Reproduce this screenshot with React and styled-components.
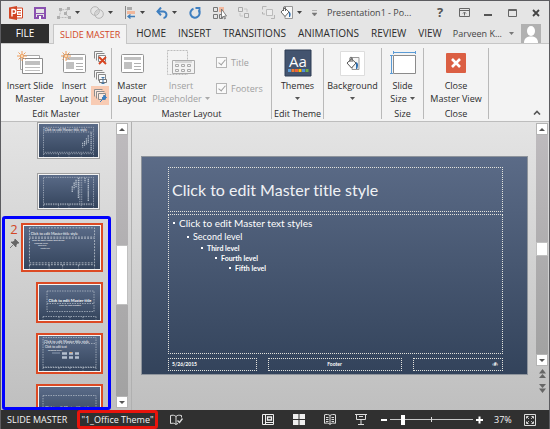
import { useState } from 'react'
import styled, { createGlobalStyle, css } from 'styled-components'

const GlobalStyle = createGlobalStyle`
  * {
    box-sizing: border-box;
  }
  body {
    margin: 0;
    font-family: "Open Sans", "Noto Sans", sans-serif;
    font-size: 9px;
    line-height: 13px;
    color: #2b2b2b;
  }
  button, input {
    font: inherit;
    color: inherit;
    margin: 0;
  }
  svg {
    display: block;
    flex: none;
  }
`

const Window = styled.div`
  display: flex;
  flex-direction: column;
  height: 100vh;
  overflow: hidden;
  border: 1px solid #5c5c60;
  border-bottom: 0;
  background: #e5e5e5;
`

const PlainButton = styled.button`
  display: flex;
  align-items: center;
  justify-content: center;
  flex: none;
  padding: 0;
  border: 0;
  background: none;
  white-space: nowrap;
`

/* title bar */
const TitleBar = styled.header`
  display: flex;
  align-items: center;
  height: 23px;
  padding: 0 7px 0 8px;
`
const QuickTools = styled.div`
  display: flex;
  align-items: center;
`
const QuickButton = styled(PlainButton)`
  width: ${(p) => p.$width || 24}px;
  justify-content: flex-start;
  gap: 4px;
`
const WindowTitle = styled.h1`
  flex: 1;
  margin: 0;
  font-size: 9px;
  font-weight: 400;
  color: #444;
  white-space: nowrap;
`
const WindowButtons = styled.div`
  display: flex;
  align-items: center;
  gap: 12px;
`
const WindowButton = styled(PlainButton)`
  width: 12px;
  height: 16px;
  font-size: 13px;
  font-weight: 700;
  color: #555;
`

/* tabs */
const TabRow = styled.nav`
  display: flex;
  align-items: stretch;
  height: 20px;
  padding-right: 8px;
  border-bottom: 1px solid #c6c6c6;
`
const Tab = styled(PlainButton)`
  padding: 0 6px;
  font-size: 10px;
  ${(p) => p.$file && css`
    width: 48px;
    margin-right: 4px;
    background: #2f2f2f;
    color: #fff;
  `}
  ${(p) => p.$active && css`
    margin-bottom: -1px;
    margin-right: 3px;
    border: 1px solid #c6c6c6;
    border-bottom: 0;
    background: #f3f3f3;
    color: #d24726;
    font-size: 9px;
  `}
`
const Account = styled(PlainButton)`
  margin-left: auto;
  gap: 7px;
  color: #444;
`

/* ribbon */
const Ribbon = styled.section`
  display: flex;
  height: 78px;
  padding: 4px 0 2px;
  background: #f3f3f3;
  border-bottom: 1px solid #bdbdbd;
`
const Group = styled.div`
  display: flex;
  flex-direction: column;
  align-items: center;
  justify-content: space-between;
  flex: none;
  width: ${(p) => p.$width}px;
  border-right: 1px solid #b9b9b9;
`
const GroupBody = styled.div`
  display: flex;
  flex: 1;
  justify-content: center;
`
const GroupLabel = styled.div`
  line-height: 11px;
  white-space: nowrap;
`
const BigButton = styled(PlainButton)`
  flex-direction: column;
  justify-content: flex-start;
  width: ${(p) => p.$width}px;
  color: ${(p) => (p.disabled ? '#a0a0a0' : 'inherit')};
`
const IconBox = styled.span`
  display: flex;
  align-items: center;
  justify-content: center;
  height: 30px;
  margin-bottom: 1px;
`
const Line = styled.span`
  display: flex;
  align-items: center;
  gap: 3px;
  height: 13px;
`
const SmallTools = styled.div`
  display: flex;
  flex-direction: column;
`
const SmallButton = styled(PlainButton)`
  width: 18px;
  height: 19px;
  background: ${(p) => (p.$on ? '#f8cbb3' : 'none')};
`
const Checks = styled.div`
  display: flex;
  flex-direction: column;
  gap: 13px;
  width: 57px;
  padding: 8px 0 0 4px;
`
const Check = styled.label`
  display: flex;
  align-items: center;
  gap: 4px;
  color: #a0a0a0;
`
const CheckBox = styled.input`
  appearance: none;
  display: grid;
  place-items: center;
  width: 11px;
  height: 11px;
  border: 1px solid #b5b5b5;
  background: #fafafa;
  &:checked::after {
    content: "";
    width: 3px;
    height: 6px;
    margin-bottom: 2px;
    border: solid #a0a0a0;
    border-width: 0 1px 1px 0;
    transform: rotate(40deg);
  }
`
const Collapse = styled(PlainButton)`
  margin: auto 8px 0 auto;
  height: 13px;
`

/* work area */
const Work = styled.main`
  display: flex;
  flex: 1;
  min-height: 0;
  padding-right: 1px;
  background: linear-gradient(#e4e4e4, #bfbfbf);
`
const Pane = styled.aside`
  display: flex;
  flex-direction: column;
  flex: none;
  width: 115px;
  overflow: hidden;
  padding: 0 5px 0 1px;
`
const LayoutThumbs = styled.div`
  display: flex;
  flex-direction: column;
  align-items: flex-end;
  gap: 14px;
  padding: 0 11px 6px 0;
`
const SelectedMaster = styled.div`
  display: grid;
  grid-template-columns: 14px 1fr;
  align-content: start;
  flex: 1;
  min-height: 0;
  overflow: hidden;
  padding: 4px 6px 0 2px;
  border: 3px solid #0000fe;
  border-radius: 3px;
`
const MasterMark = styled.div`
  display: flex;
  flex-direction: column;
  align-items: center;
  gap: 3px;
  font-size: 13px;
  color: #d24726;
`
const SelectedThumbs = styled.div`
  display: flex;
  flex-direction: column;
  align-items: flex-end;
  gap: 10px;
`
const Thumb = styled.button`
  display: block;
  flex: none;
  width: ${(p) => (p.$master ? 82 : p.$selected ? 67 : 63)}px;
  height: ${(p) => (p.$master ? 49 : p.$selected ? 41 : 37)}px;
  padding: 1px;
  border: ${(p) => (p.$selected ? '2px solid #dc4a24' : '1px solid #a0a0a0')};
  background: #f4f4f4;
  svg {
    width: 100%;
    height: 100%;
    background: linear-gradient(#5a6b88, #34445c);
  }
`

const ScrollBar = styled.div`
  display: flex;
  flex-direction: column;
  flex: none;
  width: 12px;
  padding-top: 1px;
  padding-bottom: ${(p) => p.$bottom || 2}px;
`
const ScrollButton = styled(PlainButton)`
  height: 12px;
  border: 1px solid #b4b4b4;
  background: #fff;
`
const Track = styled.div`
  display: flex;
  flex-direction: column;
  flex: 1;
  background: linear-gradient(#bdbabd, #a2a2a2);
`
const ScrollThumb = styled.div`
  flex: ${(p) => p.$size};
  border: 1px solid #c0c0c0;
  background: #fff;
`
const Gap = styled.div`
  flex: ${(p) => p.$size};
`
const PageButtons = styled.div`
  display: flex;
  flex-direction: column;
  align-items: center;
  gap: 6px;
  padding-top: 3px;
`
const Canvas = styled.div`
  flex: 1;
  min-width: 0;
  margin-left: 3px;
  padding: 34px 8px 0 9px;
  border-left: 1px solid #b0b0b0;
`
const Slide = styled.article`
  display: flex;
  flex-direction: column;
  gap: 2px;
  aspect-ratio: 387 / 219;
  padding: 10px 24px 3px 26px;
  border: 1px solid #8e949c;
  background: linear-gradient(#5b6b87, #33435b);
  color: #fff;
  font-family: Lato, sans-serif;
  font-variant-ligatures: none;
`
const placeholder = css`
  border: 1px dotted #e4e4de;
`
const SlideTitle = styled.h2`
  ${placeholder}
  display: flex;
  align-items: center;
  height: 45px;
  margin: 0;
  padding: 0 3px;
  font-size: 16px;
  font-weight: 400;
  color: #f0f2f5;
  white-space: nowrap;
`
const SlideBody = styled.ul`
  ${placeholder}
  flex: 1;
  margin: 0;
  padding: 1px 4px;
  list-style: none;
`
const Level = styled.li`
  display: flex;
  align-items: center;
  gap: 4px;
  padding-left: ${(p) => p.$depth * 14}px;
  font-size: ${(p) => [10, 9, 7, 7, 7][p.$depth]}px;
  font-weight: ${(p) => (p.$depth < 2 ? 400 : 700)};
  line-height: ${(p) => [14, 13, 10, 10, 10][p.$depth]}px;
  &::before {
    content: "";
    width: 2px;
    height: 2px;
    background: #fff;
  }
`
const SlideFooter = styled.footer`
  display: grid;
  grid-template-columns: 89fr 134fr 90fr;
  gap: 11px;
  margin-top: 2px;
  font-size: 5px;
  font-weight: 700;
  line-height: 11px;
`
const FooterBox = styled.div`
  ${placeholder}
  padding: 0 4px 0 3px;
  text-align: ${(p) => p.$align};
`

/* status bar */
const StatusBar = styled.footer`
  display: flex;
  align-items: center;
  flex: none;
  height: 19px;
  padding: 0 13px 0 6px;
  background: #303030;
  color: #f4f4f4;
`
const StatusText = styled.span`
  width: 70px;
  white-space: nowrap;
`
const ThemeName = styled.span`
  display: flex;
  align-items: center;
  justify-content: center;
  align-self: stretch;
  width: 81px;
  margin-right: 12px;
  border: 3px solid #e8140c;
  border-radius: 3px;
  white-space: nowrap;
`
const Views = styled.div`
  display: flex;
  gap: 19px;
  margin-left: auto;
  margin-right: 14px;
`
const Slider = styled.input`
  appearance: none;
  width: 83px;
  height: 12px;
  margin: 0 3px;
  background:
    linear-gradient(#ddd, #ddd) center / 1px 5px no-repeat,
    linear-gradient(#c8c8c8, #c8c8c8) center / 100% 1px no-repeat;
  &::-webkit-slider-thumb {
    appearance: none;
    width: 4px;
    height: 10px;
    background: #fff;
  }
`
const Percent = styled.span`
  width: 41px;
  padding-left: 11px;
`

const Icon = ({ w, h = w, children, ...rest }) => (
  <svg width={w} height={h} viewBox={`0 0 ${w} ${h}`} fill="none" aria-hidden="true" {...rest}>
    {children}
  </svg>
)

const Caret = ({ color = '#555' }) => (
  <Icon w={5} h={3}><path d="M0 0h5L2.500 3z" fill={color} /></Icon>
)

const PowerPointIcon = () => (
  <Icon w={14}>
    <path d="M6 2h7.500v10H6z" fill="#fff" stroke="#d24726" />
    <path d="M8 4.500h4M9 7h3M8 9.500h4" stroke="#d24726" />
    <path d="M0 1.500L8 0v14L0 12.500z" fill="#d24726" />
    <path d="M3 10.500v-7h1.800a1.900 1.900 0 0 1 0 3.900H3" stroke="#fff" strokeWidth="1.400" />
  </Icon>
)
const SaveIcon = () => (
  <Icon w={12}>
    <path d="M1 1h10v10H1z" stroke="#8a51b0" strokeWidth="2" />
    <path d="M2 6.500h8" stroke="#8a51b0" />
    <path d="M3 8h6v4H3z" fill="#8a51b0" />
    <path d="M5 9h2v3H5z" fill="#fff" />
  </Icon>
)
const EditPointsIcon = () => (
  <Icon w={14} h={12}>
    <path d="M2 10.500L4 3l8-1-4 4 4 4.500z" stroke="#b8b8b8" strokeDasharray="2 1" />
    <path d="M0 9h3v3H0zM2 1h3v3H2zM10 0h3v3h-3zM7 5h3v3H7zM11 9h3v3h-3z" fill="#b0b0b0" />
  </Icon>
)
const MergeIcon = () => (
  <Icon w={14} h={13}>
    <circle cx="5" cy="5" r="4.300" stroke="#b4b4b4" />
    <circle cx="9" cy="8" r="4.300" stroke="#b4b4b4" />
    <path d="M5 8a4.300 4.300 0 0 1 4.300-4.300A4.300 4.300 0 0 1 5 8z" fill="#cfcfcf" />
  </Icon>
)
const AlignIcon = () => (
  <Icon w={11} h={13}>
    <path d="M.5 0v13" stroke="#888" />
    <path d="M2 1h5v3H2z" fill="#aaa" />
    <path d="M2 5h8v3H2z" fill="#f0b79b" />
    <path d="M10 10.500H3M5.500 8.500l-2.500 2 2.500 2" stroke="#3f7db8" strokeWidth="1.300" />
  </Icon>
)
const UndoIcon = () => (
  <Icon w={12} h={12}>
    <path d="M1.500 4.500h5.500a3.200 3.200 0 0 1 .5 6.400" stroke="#3f7fc0" strokeWidth="2" />
    <path d="M5 .5L1.500 4.500 5 8.300" stroke="#3f7fc0" strokeWidth="2" />
  </Icon>
)
const RedoIcon = () => (
  <Icon w={12} h={12}>
    <path d="M4.500 1.700A4.600 4.600 0 1 0 9.600 3.200" stroke="#3f7fc0" strokeWidth="2" />
    <path d="M6.500 1h4v4.500" stroke="#3f7fc0" strokeWidth="1.800" />
  </Icon>
)
const SelectIcon = () => (
  <Icon w={14} h={14}>
    <path d="M.5 1.500h4v4h-4zM.5 8.500h4v4h-4zM6.500 8.500h3v4h-3z" stroke="#777" />
    <path d="M6 1h5v5H6z" fill="#f2b99f" />
    <path d="M8.500 3v9l2-2 1 3 1-.5-1-2.500h2z" fill="#fff" stroke="#666" strokeWidth=".8" />
  </Icon>
)
const GroupIcon = () => (
  <Icon w={13} h={13}>
    <path d="M1.500 1.500h4v4h-4zM7.500 7.500h4v4h-4z" fill="#e8e8e8" stroke="#aaa" />
    <path d="M7 3h3v3M3 7v3h3" stroke="#c4c4c4" />
  </Icon>
)
const UngroupIcon = () => (
  <Icon w={13} h={13}>
    <path d="M4.500 3.500h6v6h-6z" fill="#ececec" stroke="#bbb" />
    <path d="M.5 3.500v-3h4M12.500 9v3.500H9M.5 6v2H3" stroke="#b4b4b4" />
  </Icon>
)
const BucketIcon = () => (
  <Icon w={13} h={13}>
    <path d="M5 .5h7.500v12H5z" fill="#f6f6f6" stroke="#999" />
    <path d="M1 6l4-4 4 4-4 4.500z" fill="#fff" stroke="#666" />
    <path d="M3.500 5V1.500c0-1 2-1 2 0V5" stroke="#666" />
    <path d="M9 5.500c2 1 2 3 1 5.500H9z" fill="#2f6fb0" />
  </Icon>
)

const Spark = () => (
  <g stroke="#ee9c5a" strokeWidth="1">
    <path d="M5 0v3M5 7v3M0 5h3M7 5h3M1.500 1.500l2 2M6.500 6.500l2 2M1.500 8.500l2-2M6.500 3.500l2-2" />
    <circle cx="5" cy="5" r="1.500" fill="#fff7dc" />
  </g>
)
const InsertSlideIcon = () => (
  <Icon w={26} h={24}>
    <path d="M3.500 4.500h19v14h-19z" fill="#fff" stroke="#a8a8a8" />
    <path d="M5.500 7.500h20v15h-20z" fill="#fff" stroke="#8b8b8b" />
    <path d="M8 10h15v4H8z" fill="#c0c0c0" />
    <path d="M8 16.500h15M8 19.500h15" stroke="#c0c0c0" />
    <Spark />
  </Icon>
)
const LayoutIcon = ({ spark }) => (
  <Icon w={26} h={24}>
    <rect x="2.500" y="3.500" width="22" height="18" rx="1" fill="#fff" stroke="#949494" />
    <path d="M5 6h17v3H5zM5 11h8v7H5z" fill="#c0c0c0" />
    <path d="M15 12.500h7M15 15.500h7M15 18.500h7" stroke="#b0b0b0" />
    {spark && <Spark />}
  </Icon>
)
const PlaceholderIcon = () => (
  <Icon w={28} h={28}>
    <path d="M.5 1.500h20v24H.500z" stroke="#bdbdbd" strokeDasharray="2 1" />
    <path d="M5.500 11.500h22v13h-22z" fill="#f3f3f3" stroke="#aaa" />
    <path d="M8 13h17" stroke="#bbb" />
    <path d="M8.500 15.500h3v2h-3zM14.500 15.500h3v2h-3zM20.500 15.500h3v2h-3zM8.500 20.500h3v2h-3zM14.500 20.500h3v2h-3zM20.500 20.500h3v2h-3z" stroke="#aaa" />
  </Icon>
)
const stack = 'M.5 7.500v-7h8M2.500 9.500v-7h8M4.500 4.500h7v6h-7z'
const DeleteIcon = () => (
  <Icon w={13} h={14}>
    <path d={stack} stroke="#888" fill="#f8f8f8" />
    <path d="M5 6l7 7M12 6l-7 7" stroke="#d9441f" strokeWidth="1.800" />
  </Icon>
)
const RenameIcon = () => (
  <Icon w={13} h={14}>
    <path d={stack} stroke="#888" fill="#f8f8f8" />
    <path d="M5.500 9.500h7v3h-7z" stroke="#777" fill="#fff" />
    <path d="M9 7.500v6M7.500 7.500h3M7.500 13.500h3" stroke="#4679a8" />
  </Icon>
)
const PreserveIcon = () => (
  <Icon w={13} h={14}>
    <path d={stack} stroke="#8d8d8d" fill="#fbe9df" />
    <path d="M10 6l2.500 2.500-1 .5-1.500 2-2-2 1.500-1.500z" fill="#3c7fc0" stroke="#3c7fc0" />
    <path d="M8.500 10.500L6 13" stroke="#3c7fc0" />
  </Icon>
)
const ThemesIcon = () => (
  <Icon w={28} h={28}>
    <path d="M1 1h26v26H1z" fill="#43546f" stroke="#2f3d54" />
    <text x="5" y="18" fill="#fff" fontSize="15" fontFamily="Open Sans">Aa</text>
    <path d="M4 20h3v3H4z" fill="#5b9bd5" />
    <path d="M7.500 20h3v3h-3z" fill="#ed7d31" />
    <path d="M11 20h3v3h-3z" fill="#f0603a" />
    <path d="M14.500 20h3v3h-3z" fill="#ffc000" />
    <path d="M18 20h3v3h-3z" fill="#4f8ee0" />
    <path d="M21.500 20h3v3h-3z" fill="#70ad47" />
  </Icon>
)
const BackgroundIcon = () => (
  <Icon w={25} h={25}>
    <path d="M.5.5h24v24H.5z" fill="#fff" stroke="#ddd" />
    <g transform="translate(6 5)">
      <path d="M6 1.500h7v12H6z" fill="#f6f6f6" stroke="#999" />
      <path d="M1 7l4.500-4 4.500 4-4.500 5z" fill="#fff" stroke="#555" />
      <path d="M4 6V2c0-1 2-1 2 0v4" stroke="#555" />
      <path d="M10 6c2.500 1 2.500 4 1 7h-1z" fill="#2f6fb0" />
    </g>
  </Icon>
)
const SlideSizeIcon = () => (
  <Icon w={26} h={24}>
    <path d="M3.500 4.500h22v18h-22z" fill="#fff" stroke="#8b8b8b" />
    <path d="M3 1.500h23M3.500 0v3M25.500 0v3M1.500 4v19M0 4.500h3M0 22.500h3" stroke="#5b9bd5" />
  </Icon>
)
const CloseIcon = () => (
  <Icon w={20} h={20}>
    <rect width="20" height="20" rx="1" fill="#db5f43" />
    <path d="M6 6l8 8M14 6l-8 8" stroke="#fff" strokeWidth="2.600" />
  </Icon>
)
const PinIcon = () => (
  <Icon w={9} h={9}>
    <path d="M5 0l4 4-1.500.2L6 6v2L3.500 5.500 1 3h2l1.700-1.500zM3.200 5.800L0 9" fill="#666" stroke="#666" strokeWidth=".8" />
  </Icon>
)
const ArrowIcon = ({ down }) => (
  <Icon w={6} h={3}><path d={down ? 'M0 0h6L3 3z' : 'M0 3h6L3 0z'} fill="#555" /></Icon>
)
const PageIcon = ({ down }) => (
  <Icon w={7} h={9}>
    {down
      ? <path d="M0 0h7L3.500 4zM0 4.500h7L3.500 9z" fill="#666" />
      : <path d="M0 4.500h7L3.500 0zM0 9h7L3.500 5z" fill="#666" />}
  </Icon>
)

const dash = { stroke: '#b9c1cc', strokeWidth: 0.7, strokeDasharray: '1.500 1' }
const tiny = { fill: '#fff', fontFamily: 'Lato', fontSize: 3.500 }
const thumbFooter = 'M4 31.500h53M4 31.500v3M20 31.500v3M31 31.500v3M44 31.500v3M57 31.500v3'

const thumbArt = {
  vertical: (
    <>
      <path d="M4 3.500h53v5H4zM4 9v21h53V9" {...dash} />
      <path d={thumbFooter} {...dash} />
      <text x="5" y="7.500" {...tiny}>Click to edit Master title style</text>
      <path d="M54.500 9v19M51.500 12v8M49.500 15v7M47.500 18v5M45.500 20v5" stroke="#b5bfcc" strokeWidth="1.200" strokeDasharray="1.500 .7" />
    </>
  ),
  verticalTitle: (
    <>
      <path d="M4 2.500h53v28H4zM42.500 2.500v28M44.500 2.500v28" {...dash} />
      <path d={thumbFooter} {...dash} />
      <path d="M51.500 4v24M48 3v5M41 3v22M38.500 5v8M36.500 8v7M34.500 12v6" stroke="#b5bfcc" strokeWidth="1.400" strokeDasharray="1.500 .7" />
    </>
  ),
  title: (
    <>
      <path d="M8 6h47v12.500H8zM8 18.500v8h47v-8" {...dash} />
      <path d={thumbFooter} {...dash} />
      <text x="31" y="17" textAnchor="middle" {...tiny} fontSize="4" fontWeight="700">Click to edit Master title</text>
      <text x="31" y="21" textAnchor="middle" {...tiny} fontSize="2.500">Click to edit subtitle</text>
    </>
  ),
  content: (
    <>
      <path d="M4 1.500h53v6H4zM4 8v23h53V8" {...dash} />
      <path d={thumbFooter} {...dash} />
      <text x="5" y="6.500" {...tiny}>Click to edit Master title style</text>
      <text x="6" y="11.500" {...tiny} fontSize="3">Click to edit text</text>
      <text x="9" y="14.500" {...tiny} fontSize="2.500">Second level</text>
      <path d="M13 17h8" stroke="#8b9bb2" />
      <path d="M23 17.500h5M30 17.500h4M36 17.500h4M23 21.500h5M30 21.500h4M36 21.500h4" stroke="#b4bfce" strokeWidth="2.500" />
      <path d="M31 16.500h2" stroke="#d9a06f" />
    </>
  ),
  section: (
    <>
      <path d="M4 8.500h53v14H4z" {...dash} />
      <text x="6" y="21.500" {...tiny}>Click to edit Master title style</text>
      <path d={thumbFooter} {...dash} />
    </>
  ),
  master: (
    <>
      <path d="M4 1.500h53v7.500H4zM4 10v20h53V10z" {...dash} />
      <path d={thumbFooter} {...dash} />
      <text x="5" y="7" {...tiny} fontSize="3">Click to edit Master title style</text>
      <text x="6" y="12" {...tiny} fontSize="2">Click to edit Master text styles</text>
      <text x="8" y="14.500" {...tiny} fontSize="2">Second level</text>
      <text x="11" y="16.500" {...tiny} fontSize="1.500">Third level</text>
      <text x="13" y="18.500" {...tiny} fontSize="1.500">Fourth level</text>
    </>
  ),
}

function LayoutThumb({ kind, label, ...rest }) {
  return (
    <Thumb type="button" aria-label={label} {...rest}>
      <svg viewBox="0 0 61 35" fill="none">{thumbArt[kind]}</svg>
    </Thumb>
  )
}

const quickTools = [
  { label: 'PowerPoint', icon: <PowerPointIcon />, width: 25 },
  { label: 'Save', icon: <SaveIcon />, width: 23 },
  { label: 'Edit Points', icon: <EditPointsIcon />, width: 33, caret: true },
  { label: 'Merge Shapes', icon: <MergeIcon />, width: 35, caret: true },
  { label: 'Align', icon: <AlignIcon />, width: 31, caret: true },
  { label: 'Undo', icon: <UndoIcon />, width: 33, caret: true },
  { label: 'Redo', icon: <RedoIcon />, width: 24 },
  { label: 'Select', icon: <SelectIcon />, width: 24 },
  { label: 'Group', icon: <GroupIcon />, width: 25 },
  { label: 'Ungroup', icon: <UngroupIcon />, width: 18 },
  { label: 'Shape Fill', icon: <BucketIcon />, width: 32, caret: true },
]

const tabs = ['HOME', 'INSERT', 'TRANSITIONS', 'ANIMATIONS', 'REVIEW', 'VIEW']
const levels = ['Click to edit Master text styles', 'Second level', 'Third level', 'Fourth level', 'Fifth level']

function RibbonBar() {
  return (
    <Ribbon>
      <Group $width={111}>
        <GroupBody>
          <BigButton $width={54}>
            <IconBox><InsertSlideIcon /></IconBox>
            <Line>Insert Slide</Line>
            <Line>Master</Line>
          </BigButton>
          <BigButton $width={34}>
            <IconBox><LayoutIcon spark /></IconBox>
            <Line>Insert</Line>
            <Line>Layout</Line>
          </BigButton>
          <SmallTools>
            <SmallButton aria-label="Delete"><DeleteIcon /></SmallButton>
            <SmallButton aria-label="Rename"><RenameIcon /></SmallButton>
            <SmallButton aria-label="Preserve" $on><PreserveIcon /></SmallButton>
          </SmallTools>
        </GroupBody>
        <GroupLabel>Edit Master</GroupLabel>
      </Group>
      <Group $width={160}>
        <GroupBody>
          <BigButton $width={36}>
            <IconBox><LayoutIcon /></IconBox>
            <Line>Master</Line>
            <Line>Layout</Line>
          </BigButton>
          <BigButton $width={62} disabled>
            <IconBox><PlaceholderIcon /></IconBox>
            <Line>Insert</Line>
            <Line>Placeholder <Caret color="#aaa" /></Line>
          </BigButton>
          <Checks>
            <Check><CheckBox type="checkbox" defaultChecked disabled />Title</Check>
            <Check><CheckBox type="checkbox" defaultChecked disabled />Footers</Check>
          </Checks>
        </GroupBody>
        <GroupLabel>Master Layout</GroupLabel>
      </Group>
      <Group $width={52}>
        <GroupBody>
          <BigButton $width={48}>
            <IconBox><ThemesIcon /></IconBox>
            <Line>Themes</Line>
            <Line><Caret /></Line>
          </BigButton>
        </GroupBody>
        <GroupLabel>Edit Theme</GroupLabel>
      </Group>
      <Group $width={58}>
        <GroupBody>
          <BigButton $width={56}>
            <IconBox><BackgroundIcon /></IconBox>
            <Line>Background</Line>
            <Line><Caret /></Line>
          </BigButton>
        </GroupBody>
      </Group>
      <Group $width={42}>
        <GroupBody>
          <BigButton $width={40}>
            <IconBox><SlideSizeIcon /></IconBox>
            <Line>Slide</Line>
            <Line>Size <Caret /></Line>
          </BigButton>
        </GroupBody>
        <GroupLabel>Size</GroupLabel>
      </Group>
      <Group $width={65}>
        <GroupBody>
          <BigButton $width={62}>
            <IconBox><CloseIcon /></IconBox>
            <Line>Close</Line>
            <Line>Master View</Line>
          </BigButton>
        </GroupBody>
        <GroupLabel>Close</GroupLabel>
      </Group>
      <Collapse aria-label="Collapse the ribbon">
        <Icon w={8} h={5}><path d="M1 4.500l3-3 3 3" stroke="#555" strokeWidth="1.600" /></Icon>
      </Collapse>
    </Ribbon>
  )
}

function Status() {
  const [zoom, setZoom] = useState(37)
  return (
    <StatusBar>
      <StatusText>SLIDE MASTER</StatusText>
      <ThemeName>"1_Office Theme"</ThemeName>
      <PlainButton aria-label="Spelling">
        <Icon w={13} h={12} stroke="#ddd">
          <path d="M6 2.500C4.500 1 2.500 1 .5 1.500v8c2-.5 4-.5 5.500 1 .5-.5 1-.8 2-1M6 2.500v8M6 2.500C7.500 1 9 1 11.500 1.500v2" />
          <path d="M7.500 6.500l2 2 3-4" strokeWidth="1.400" />
        </Icon>
      </PlainButton>
      <Views>
        <PlainButton aria-label="Normal">
          <Icon w={12} h={11} stroke="#eee">
            <path d="M.5.5h11v10H.5zM3.500 1v9M4 8.500h7.500" />
            <path d="M5.500 3h4v3h-4z" strokeWidth="1.300" />
          </Icon>
        </PlainButton>
        <PlainButton aria-label="Slide Sorter">
          <Icon w={12} h={11} fill="#eee"><path d="M0 0h5.500v5H0zM6.500 0H12v5H6.500zM0 6h5.500v5H0zM6.500 6H12v5H6.500z" /></Icon>
        </PlainButton>
        <PlainButton aria-label="Reading View">
          <Icon w={12} h={11} stroke="#ddd">
            <path d="M6 1.500C4.500.3 2.500.3.5.8v8.500c2-.5 4-.3 5.500 1 1.500-1.300 3.500-1.500 5.500-1V.8C9.500.3 7.500.3 6 1.500zv9M2 3.500h2.500M2 5.500h2.500M2 7.500h2.500M7.500 3.500H10M7.500 5.500H10M7.500 7.500H10" />
          </Icon>
        </PlainButton>
        <PlainButton aria-label="Slide Show">
          <Icon w={12} h={11} stroke="#ddd"><path d="M0 .5h12M1.500.5v5h9v-5M6 6v4M3 10.500h6M4 2.500h4" /></Icon>
        </PlainButton>
      </Views>
      <PlainButton aria-label="Zoom out" onClick={() => setZoom(zoom - 1)}>
        <Icon w={6} h={8}><path d="M0 4h6" stroke="#fff" strokeWidth="2" /></Icon>
      </PlainButton>
      <Slider type="range" aria-label="Zoom" min="24" max="118" value={zoom} onChange={(e) => setZoom(Number(e.target.value))} />
      <PlainButton aria-label="Zoom in" onClick={() => setZoom(zoom + 1)}>
        <Icon w={7} h={8}><path d="M0 4h7M3.500 .5v7" stroke="#fff" strokeWidth="2" /></Icon>
      </PlainButton>
      <Percent>{zoom}%</Percent>
      <PlainButton aria-label="Fit to window">
        <Icon w={12} h={12} stroke="#ddd">
          <path d="M.5.5h11v11H.5z" />
          <path d="M2.500 4.500v-2h2M7.500 2.500h2v2M9.500 7.500v2h-2M4.500 9.500h-2v-2" />
          <path d="M3 3l2 2M9 3L7 5M3 9l2-2M9 9L7 7" strokeWidth=".8" />
        </Icon>
      </PlainButton>
    </StatusBar>
  )
}

export default function App() {
  return (
    <Window>
      <GlobalStyle />
      <TitleBar>
        <QuickTools>
          {quickTools.map((tool) => (
            <QuickButton key={tool.label} aria-label={tool.label} $width={tool.width}>
              {tool.icon}
              {tool.caret && <Caret color="#444" />}
            </QuickButton>
          ))}
          <QuickButton aria-label="Customize" $width={15}>
            <Icon w={5} h={6}><path d="M0 .5h5M0 3h5L2.500 6z" fill="#777" stroke="#777" strokeWidth=".5" /></Icon>
          </QuickButton>
        </QuickTools>
        <WindowTitle>Presentation1 - Po...</WindowTitle>
        <WindowButtons>
          <WindowButton>?</WindowButton>
          <WindowButton aria-label="Ribbon display options">
            <Icon w={11} h={9}><path d="M.5.5h10v8H.5zM1 2.500h9M5.500 7.500v-3M4 5.500L5.500 4 7 5.500" stroke="#666" /></Icon>
          </WindowButton>
          <WindowButton aria-label="Minimize">
            <Icon w={8} h={6}><path d="M0 5h8" stroke="#555" strokeWidth="2" /></Icon>
          </WindowButton>
          <WindowButton aria-label="Maximize">
            <Icon w={9} h={8}><path d="M.5.5h8v7h-8zM0 1.500h9" stroke="#666" /></Icon>
          </WindowButton>
          <WindowButton aria-label="Close">
            <Icon w={8} h={8}><path d="M1 1l6 6M7 1L1 7" stroke="#444" strokeWidth="1.800" /></Icon>
          </WindowButton>
        </WindowButtons>
      </TitleBar>
      <TabRow>
        <Tab $file>FILE</Tab>
        <Tab $active>SLIDE MASTER</Tab>
        {tabs.map((tab) => <Tab key={tab}>{tab}</Tab>)}
        <Account>
          Parveen K...
          <Caret color="#777" />
          <Icon w={20} h={19}>
            <path d="M0 0h20v19H0z" fill="#b1b1b1" />
            <ellipse cx="10" cy="7" rx="4" ry="5" fill="#fff" />
            <path d="M3 19c0-5 3-6.500 7-6.500s7 1.500 7 6.500z" fill="#fff" />
          </Icon>
        </Account>
      </TabRow>
      <RibbonBar />
      <Work>
        <Pane>
          <LayoutThumbs>
            <LayoutThumb kind="vertical" label="Title and Vertical Text" />
            <LayoutThumb kind="verticalTitle" label="Vertical Title and Text" />
          </LayoutThumbs>
          <SelectedMaster>
            <MasterMark>2<PinIcon /></MasterMark>
            <SelectedThumbs>
              <LayoutThumb kind="master" label="Slide Master" $master $selected />
              <LayoutThumb kind="title" label="Title Slide" $selected />
              <LayoutThumb kind="content" label="Title and Content" $selected />
              <LayoutThumb kind="section" label="Section Header" $selected />
            </SelectedThumbs>
          </SelectedMaster>
        </Pane>
        <ScrollBar>
          <ScrollButton aria-label="Scroll up"><ArrowIcon /></ScrollButton>
          <Track>
            <Gap $size={111} />
            <ScrollThumb $size={58} />
            <Gap $size={92} />
          </Track>
          <ScrollButton aria-label="Scroll down"><ArrowIcon down /></ScrollButton>
        </ScrollBar>
        <Canvas>
          <Slide>
            <SlideTitle>Click to edit Master title style</SlideTitle>
            <SlideBody>
              {levels.map((text, i) => <Level key={text} $depth={i}>{text}</Level>)}
            </SlideBody>
            <SlideFooter>
              <FooterBox $align="left">5/26/2015</FooterBox>
              <FooterBox $align="center">Footer</FooterBox>
              <FooterBox $align="right">‹#›</FooterBox>
            </SlideFooter>
          </Slide>
        </Canvas>
        <ScrollBar $bottom={17}>
          <ScrollButton aria-label="Scroll up"><ArrowIcon /></ScrollButton>
          <Track>
            <Gap $size={108} />
            <ScrollThumb $size={12} />
            <Gap $size={99} />
          </Track>
          <ScrollButton aria-label="Scroll down"><ArrowIcon down /></ScrollButton>
          <PageButtons>
            <PlainButton aria-label="Previous slide"><PageIcon /></PlainButton>
            <PlainButton aria-label="Next slide"><PageIcon down /></PlainButton>
          </PageButtons>
        </ScrollBar>
      </Work>
      <Status />
    </Window>
  )
}
